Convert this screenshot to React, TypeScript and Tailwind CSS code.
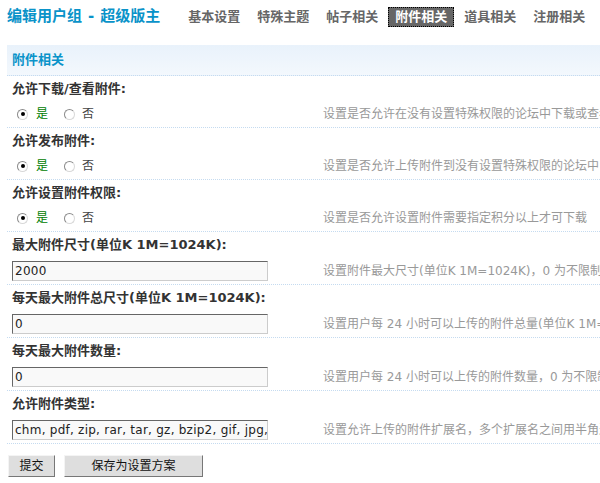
import React from "react";

const latin = { fontFamily: '"DejaVu Sans", "Noto Sans CJK SC", sans-serif' };

const navItems = ["基本设置", "特殊主题", "帖子相关", "附件相关", "道具相关", "注册相关"];

function Radio({ checked }: { checked?: boolean }) {
  return (
    <span className="flex h-[11px] w-[11px] items-center justify-center rounded-full border border-t-[#8a8a8a] border-l-[#8a8a8a] border-r-[#d8d8d8] border-b-[#d8d8d8] bg-white">
      {checked && <span className="h-[4px] w-[4px] rounded-full bg-black" />}
    </span>
  );
}

function YesNo() {
  return (
    <div className="flex items-center pl-[5px] text-[12px]">
      <Radio checked />
      <span className="ml-[8px] text-[#008000]">是</span>
      <span className="ml-[16px]">
        <Radio />
      </span>
      <span className="ml-[7px] text-[#444]">否</span>
    </div>
  );
}

function TextBox({ value }: { value: string }) {
  return (
    <div
      className="flex h-[20px] w-[256px] items-center overflow-hidden whitespace-nowrap border border-t-[#666] border-l-[#666] border-r-[#ccc] border-b-[#ccc] bg-[#f9f9f9] pl-[2px] text-[12px] tracking-[0.25px] text-[#222]"
      style={latin}
    >
      {value}
    </div>
  );
}

type Row = { label: React.ReactNode; control: React.ReactNode; desc: React.ReactNode; tall?: boolean };

const rows: Row[] = [
  { label: "允许下载/查看附件:", control: <YesNo />, desc: "设置是否允许在没有设置特殊权限的论坛中下载或查看附件" },
  { label: "允许发布附件:", control: <YesNo />, desc: "设置是否允许上传附件到没有设置特殊权限的论坛中" },
  { label: "允许设置附件权限:", control: <YesNo />, desc: "设置是否允许设置附件需要指定积分以上才可下载" },
  {
    label: "最大附件尺寸(单位K 1M=1024K):",
    control: <TextBox value="2000" />,
    desc: "设置附件最大尺寸(单位K 1M=1024K)，0 为不限制",
    tall: true,
  },
  {
    label: "每天最大附件总尺寸(单位K 1M=1024K):",
    control: <TextBox value="0" />,
    desc: "设置用户每 24 小时可以上传的附件总量(单位K 1M=1024K)，0 为不限制",
    tall: true,
  },
  {
    label: "每天最大附件数量:",
    control: <TextBox value="0" />,
    desc: "设置用户每 24 小时可以上传的附件数量，0 为不限制",
    tall: true,
  },
  {
    label: "允许附件类型:",
    control: <TextBox value="chm, pdf, zip, rar, tar, gz, bzip2, gif, jpg, jpeg, png" />,
    desc: "设置允许上传的附件扩展名，多个扩展名之间用半角逗号 \",\" 分割",
    tall: true,
  },
];

export default function App() {
  return (
    <div className="h-[483px] w-[600px] overflow-hidden bg-white" style={latin}>
      <div className="w-[900px] pl-[7px]">
        {/* page title and tab bar */}
        <div className="flex h-[32px] items-center pt-[1px]">
          <div className="text-[15px] font-bold text-[#0a93c9] whitespace-nowrap">
            编辑用户组<span className="mx-[6px]">-</span>超级版主
          </div>
          <div className="ml-[21px] flex items-center gap-[3px]">
            {navItems.map((n) => (
              <span
                key={n}
                className={
                  n === "附件相关"
                    ? "flex h-[20px] items-center border border-dotted border-black bg-[#666] px-[6px] text-[13px] font-bold text-white"
                    : "flex h-[20px] items-center border border-transparent px-[6px] text-[13px] font-bold text-[#666]"
                }
              >
                {n}
              </span>
            ))}
          </div>
        </div>

        {/* section header */}
        <div className="mt-[13px] flex h-[31px] items-center border-b border-dotted border-[#c5dbf0] bg-linear-to-b from-[#e9f2fb] to-[#f3f8fd] pl-[5px] text-[13px] font-bold text-[#0a93c9]">
          附件相关
        </div>

        {rows.map((r, i) => (
          <div
            key={i}
            className={
              (r.tall ? "h-[53px]" : "h-[52px]") +
              " flex flex-col border-b border-dotted border-[#c5dbf0] pl-[5px]"
            }
          >
            <div className="flex h-[26px] items-center text-[13px] font-bold text-[#333] whitespace-nowrap">
              {r.label}
            </div>
            <div className="flex h-[26px] items-center">
              <div className="w-[311px] shrink-0">{r.control}</div>
              <div className="whitespace-nowrap text-[12px] text-[#999]">{r.desc}</div>
            </div>
          </div>
        ))}

        {/* form buttons */}
        <div className="mt-[11px] flex items-center gap-[9px] pl-[1px]">
          <button className="flex h-[22px] w-[47px] items-center justify-center border border-t-[#f4f4f4] border-l-[#f4f4f4] border-r-[#777] border-b-[#777] bg-[#dedede] text-[12px] text-[#111]">
            提交
          </button>
          <button className="flex h-[22px] w-[139px] items-center justify-center border border-t-[#f4f4f4] border-l-[#f4f4f4] border-r-[#777] border-b-[#777] bg-[#dedede] text-[12px] text-[#111]">
            保存为设置方案
          </button>
        </div>
      </div>
    </div>
  );
}
